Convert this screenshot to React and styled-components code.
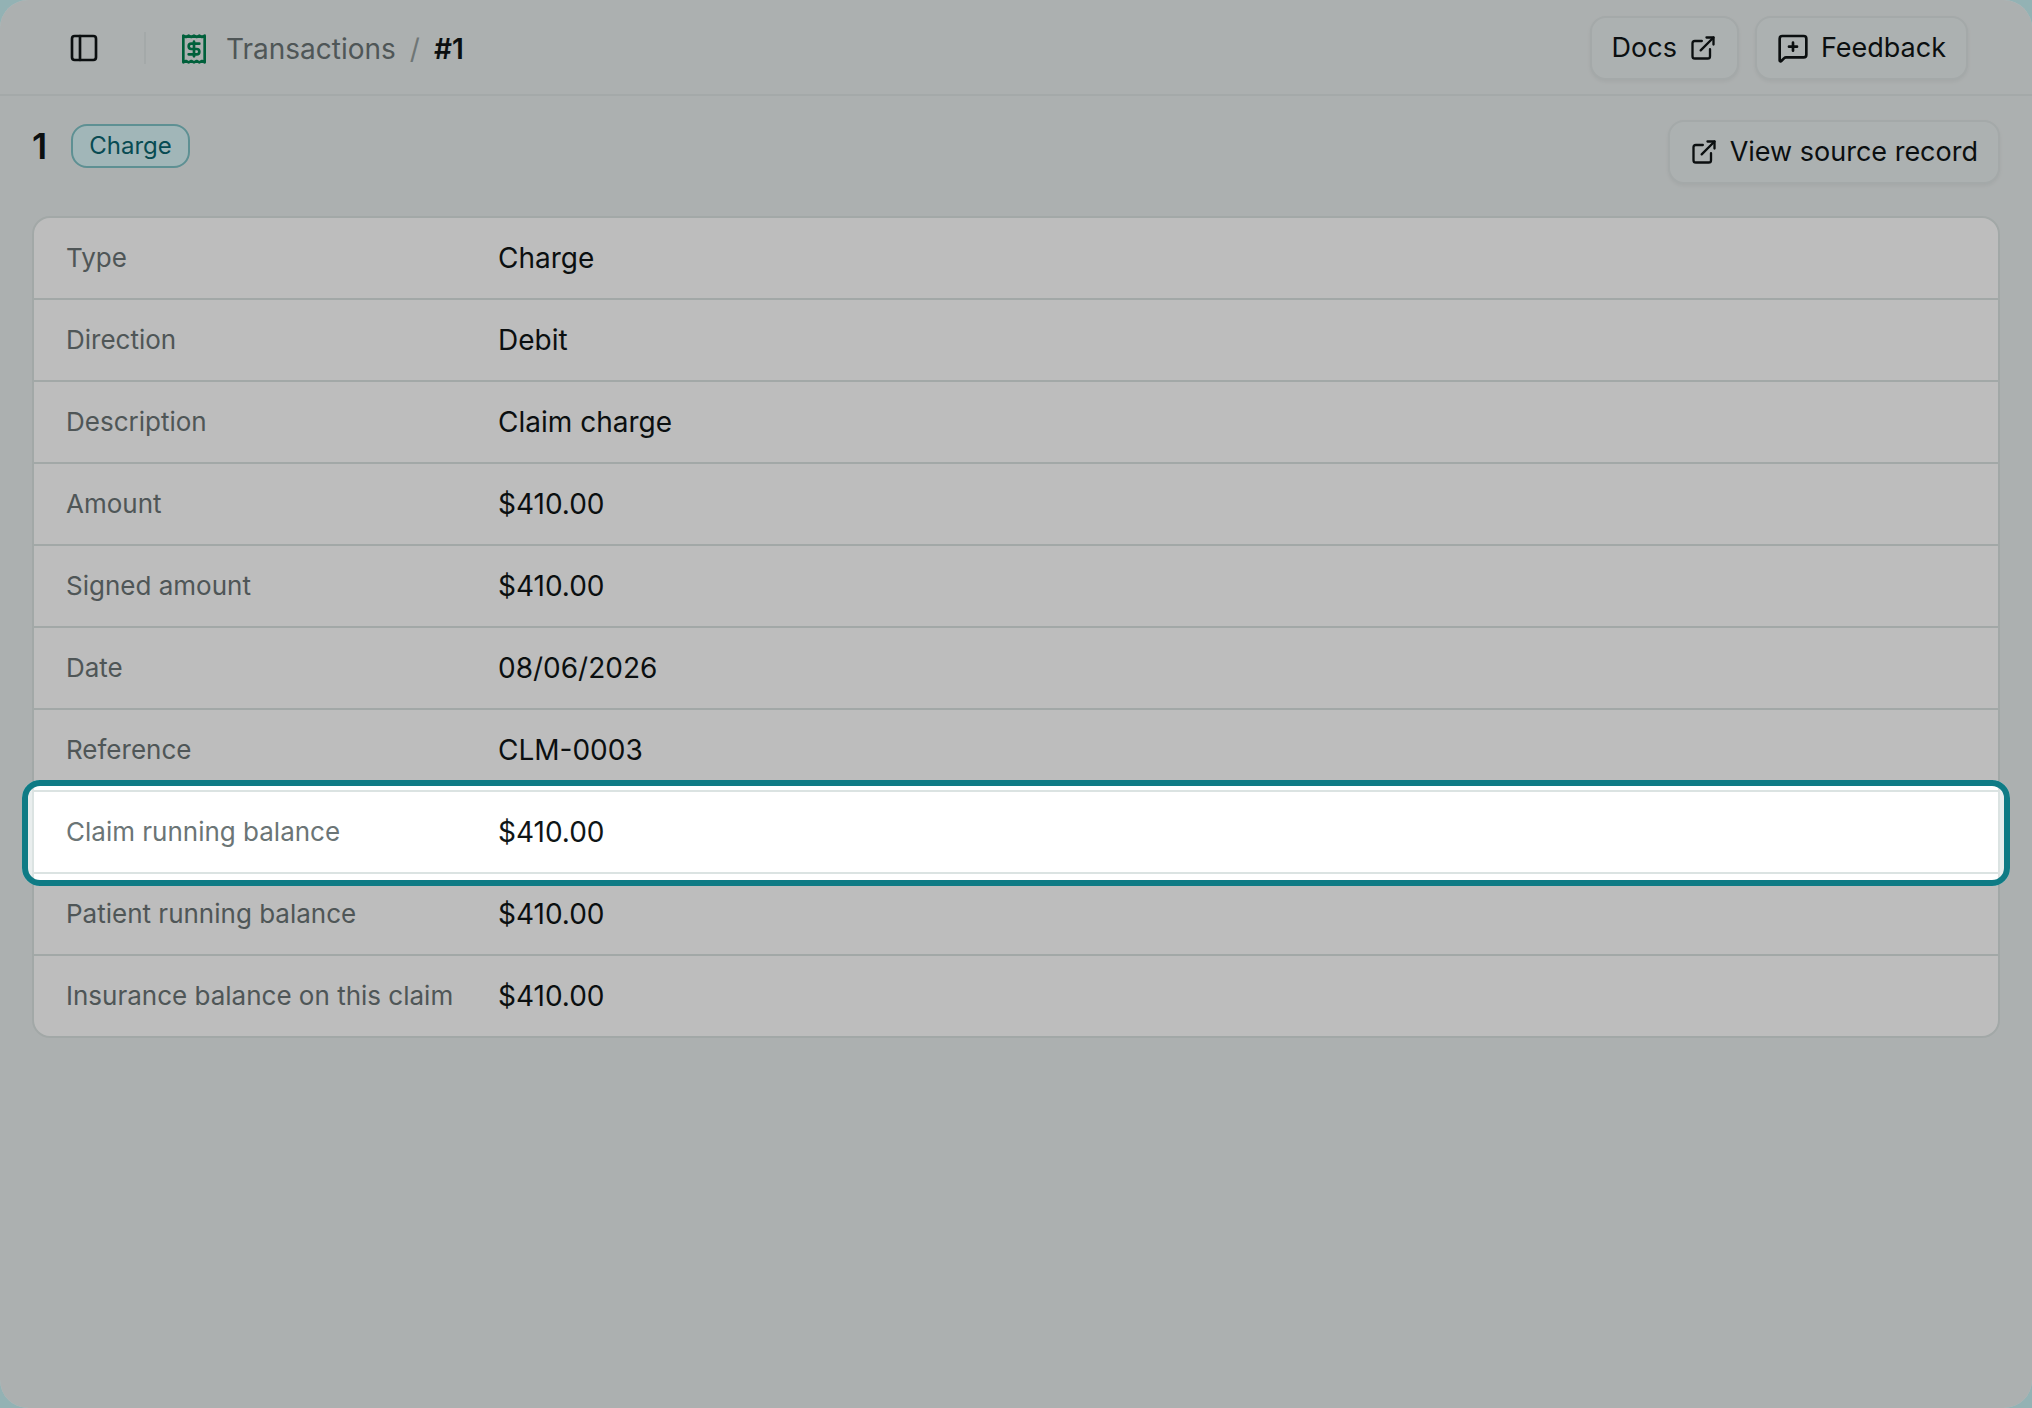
import React from 'react'
import styled, { createGlobalStyle } from 'styled-components'
import {
  ExternalLink,
  MessageSquarePlus,
  PanelLeft,
  Receipt,
} from 'lucide-react'

const details = [
  { label: 'Type', value: 'Charge' },
  { label: 'Direction', value: 'Debit' },
  { label: 'Description', value: 'Claim charge' },
  { label: 'Amount', value: '$410.00' },
  { label: 'Signed amount', value: '$410.00' },
  { label: 'Date', value: '08/06/2026' },
  { label: 'Reference', value: 'CLM-0003' },
  { label: 'Claim running balance', value: '$410.00', spotlight: true },
  { label: 'Patient running balance', value: '$410.00' },
  { label: 'Insurance balance on this claim', value: '$410.00' },
]

const GlobalStyle = createGlobalStyle`
  *, *::before, *::after {
    box-sizing: border-box;
  }

  body {
    margin: 0;
    background: #93b2b4;
    color: #0f1516;
    font-family: Inter, 'Liberation Sans', sans-serif;
    font-size: 28px;
    line-height: 40px;
  }
`

const Page = styled.div`
  min-height: 100vh;
  overflow: hidden;
  border-radius: 28px;
  background: #e9eeee;
`

const TopBar = styled.header`
  display: flex;
  align-items: center;
  height: 96px;
  padding: 2px 64px 0 56px;
  border-bottom: 2px solid #dde4e4;
`

const SidebarToggle = styled.button`
  display: flex;
  align-items: center;
  justify-content: center;
  width: 56px;
  height: 56px;
  padding: 0;
  border: 0;
  background: none;
  color: inherit;
`

const Divider = styled.span`
  width: 2px;
  height: 32px;
  margin: 0 32px;
  background: #dde4e4;
`

const Breadcrumb = styled.nav`
  display: flex;
  flex: 1;
  align-items: center;
  gap: 14px;
  padding-top: 2px;
`

const CrumbLink = styled.a`
  display: flex;
  align-items: center;
  gap: 16px;
  color: #6b7576;
  text-decoration: none;
`

const Slash = styled.span`
  color: #96a0a0;
`

const Current = styled.span`
  font-weight: 600;
`

const Actions = styled.div`
  display: flex;
  gap: 16px;
`

const Button = styled.button`
  display: flex;
  align-items: center;
  gap: 12px;
  height: 64px;
  padding: 0 20px;
  border: 2px solid #dde4e4;
  border-radius: 16px;
  background: #e9efef;
  box-shadow: 0 2px 4px rgba(0, 0, 0, 0.05);
  color: inherit;
  font: inherit;
  font-size: 27px;
`

const Content = styled.main`
  padding: 24px 32px;
`

const TitleRow = styled.div`
  display: flex;
  align-items: flex-start;
  justify-content: space-between;
  margin-bottom: 32px;
`

const Title = styled.div`
  display: flex;
  align-items: center;
  gap: 24px;
  height: 52px;
`

const Heading = styled.h1`
  margin: 0;
  font-size: 36px;
  font-weight: 600;
`

const Badge = styled.span`
  padding: 0 16px;
  border: 2px solid #7fc3c7;
  border-radius: 16px;
  background: #daf6f8;
  color: #0b6670;
  font-size: 24px;
`

const Card = styled.table`
  display: block;
  border: 2px solid #dbe3e2;
  border-radius: 18px;
  background: #fff;
`

const Rows = styled.tbody`
  display: block;
`

const Row = styled.tr`
  position: relative;
  display: grid;
  grid-template-columns: 400px 1fr;
  gap: 32px;
  padding: 20px 32px;
  border-bottom: 2px solid #dbe3e2;

  &:last-child {
    border-bottom: 0;
  }
`

const Label = styled.th`
  padding: 0;
  color: #6b7576;
  font-size: 26px;
  font-weight: 400;
  text-align: left;
  white-space: nowrap;
`

const Value = styled.td`
  padding: 0;
`

/* Ring around the row; its shadow dims the rest of the page */
const SpotlightRow = styled(Row)`
  z-index: 1;

  &::after {
    content: '';
    position: absolute;
    inset: -12px -12px -14px;
    border: 6px solid #0f7b85;
    border-radius: 18px;
    box-shadow: 0 0 0 3000px rgba(0, 0, 0, 0.26);
    pointer-events: none;
  }
`

const ReceiptIcon = styled(Receipt)`
  color: #008250;
`

const App = () => (
  <>
    <GlobalStyle />
    <Page>
      <TopBar>
        <SidebarToggle type='button' aria-label='Toggle sidebar'>
          <PanelLeft size={32} />
        </SidebarToggle>
        <Divider />
        <Breadcrumb>
          <CrumbLink href='#transactions'>
            <ReceiptIcon size={32} />
            Transactions
          </CrumbLink>
          <Slash>/</Slash>
          <Current>#1</Current>
        </Breadcrumb>
        <Actions>
          <Button type='button'>
            Docs
            <ExternalLink size={28} />
          </Button>
          <Button type='button'>
            <MessageSquarePlus size={32} />
            Feedback
          </Button>
        </Actions>
      </TopBar>

      <Content>
        <TitleRow>
          <Title>
            <Heading>1</Heading>
            <Badge>Charge</Badge>
          </Title>
          <Button type='button'>
            <ExternalLink size={28} />
            View source record
          </Button>
        </TitleRow>

        <Card>
          <Rows>
            {details.map(({ label, value, spotlight }) => {
              const DetailRow = spotlight ? SpotlightRow : Row

              return (
                <DetailRow key={label}>
                  <Label scope='row'>{label}</Label>
                  <Value>{value}</Value>
                </DetailRow>
              )
            })}
          </Rows>
        </Card>
      </Content>
    </Page>
  </>
)

export default App
